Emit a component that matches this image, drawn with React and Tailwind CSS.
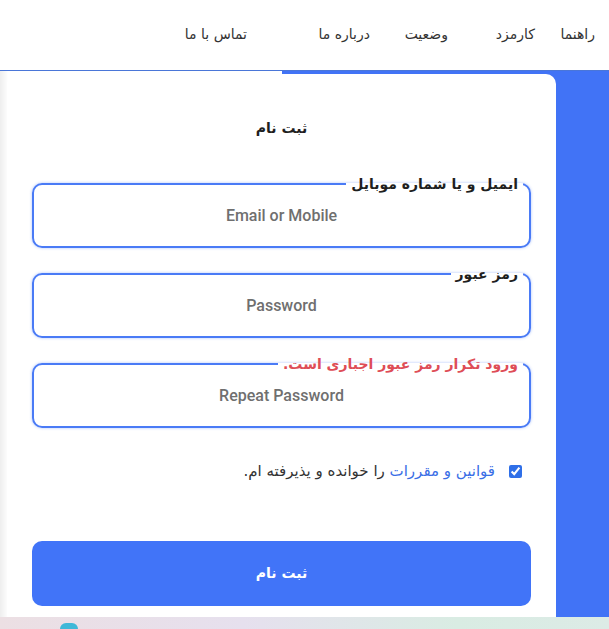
import React from 'react';

const fa = { fontFamily: '"DejaVu Sans", "Noto Sans", sans-serif' };

const navItems = [
  { label: 'راهنما', w: 'w-[60px]' },
  { label: 'کارمزد', w: 'w-[87px]' },
  { label: 'وضعیت', w: 'w-[78px]' },
  { label: 'درباره ما', w: 'w-[123px]' },
  { label: 'تماس با ما', w: 'w-[80px]' },
];

function Field({ label, placeholder, type = 'text', error = false }) {
  return (
    <fieldset className="rounded-[10px] border-2 border-[#4a7bf6] shadow-[0_0_3px_rgba(74,123,246,0.45)] pb-[10px]">
      <legend
        className={`mr-[6px] px-[5px] text-[14px] font-bold leading-[20px] ${error ? 'text-[#de4d57]' : 'text-[#1f1f1f]'}`}
        style={fa}
      >
        {label}
      </legend>
      <input
        type={type}
        dir="ltr"
        placeholder={placeholder}
        className="block h-[42px] w-full bg-transparent px-3 text-center font-['Roboto',sans-serif] text-[16px] font-medium text-[#555] outline-none placeholder:text-[#6f6f6f]"
      />
    </fieldset>
  );
}

export default function App() {
  return (
    <div dir="rtl" className="h-[629px] w-[609px] overflow-hidden bg-white">
      {/* top navigation */}
      <header className="flex h-[70px] items-center pr-[14px] pb-[2px]">
        {navItems.map((item) => (
          <a key={item.label} className={`${item.w} shrink-0 text-[14px] text-[#333]`} style={fa}>
            {item.label}
          </a>
        ))}
      </header>

      {/* split background: white with thin rule on the left, blue panel on the right */}
      <section className="h-[547px] border-t border-[#4a76d8] bg-[linear-gradient(to_right,#eeeeee_0px,#fafafa_6px,#ffffff_8px,#ffffff_282px,#4173f6_282px)] pt-[3px]">
        <div dir="ltr" className="pl-[7px]">
          <div dir="rtl" className="h-[544px] w-[549px] rounded-t-[10px] bg-white px-[25px] pt-[44px]">
            <h1 className="text-center text-[14px] font-bold leading-[20px] text-[#1f1f1f]" style={fa}>
              ثبت نام
            </h1>

            <form className="mt-[36px] flex flex-col gap-[16px]">
              <Field label="ایمیل و یا شماره موبایل" placeholder="Email or Mobile" />
              <Field label="رمز عبور" placeholder="Password" type="password" />
              <Field label="ورود تکرار رمز عبور اجباری است." placeholder="Repeat Password" type="password" error />

              <label className="mt-[16px] flex items-center gap-[14px] pr-[9px] text-[15px] text-[#333]" style={fa}>
                <input type="checkbox" defaultChecked className="h-[13px] w-[13px] accent-[#2f6fe8]" />
                <span>
                  <span className="font-medium text-[#3a6ee6]">قوانین و مقررات</span> را خوانده و یذیرفته ام.
                </span>
              </label>

              <button
                type="button"
                className="mt-[42px] h-[65px] w-full rounded-[10px] bg-[#4174f8] text-[14px] font-bold text-white"
                style={fa}
              >
                ثبت نام
              </button>
            </form>
          </div>
        </div>
      </section>

      {/* pastel strip at the fold */}
      <div dir="ltr" className="flex h-[12px] items-end bg-[linear-gradient(to_right,#ecdfe3,#e6e0ee_40%,#d9ece3_75%,#dcebe6)] pl-[60px]">
        <span className="h-[6px] w-[18px] rounded-t-full bg-[#3fb8d8]" />
      </div>
    </div>
  );
}
